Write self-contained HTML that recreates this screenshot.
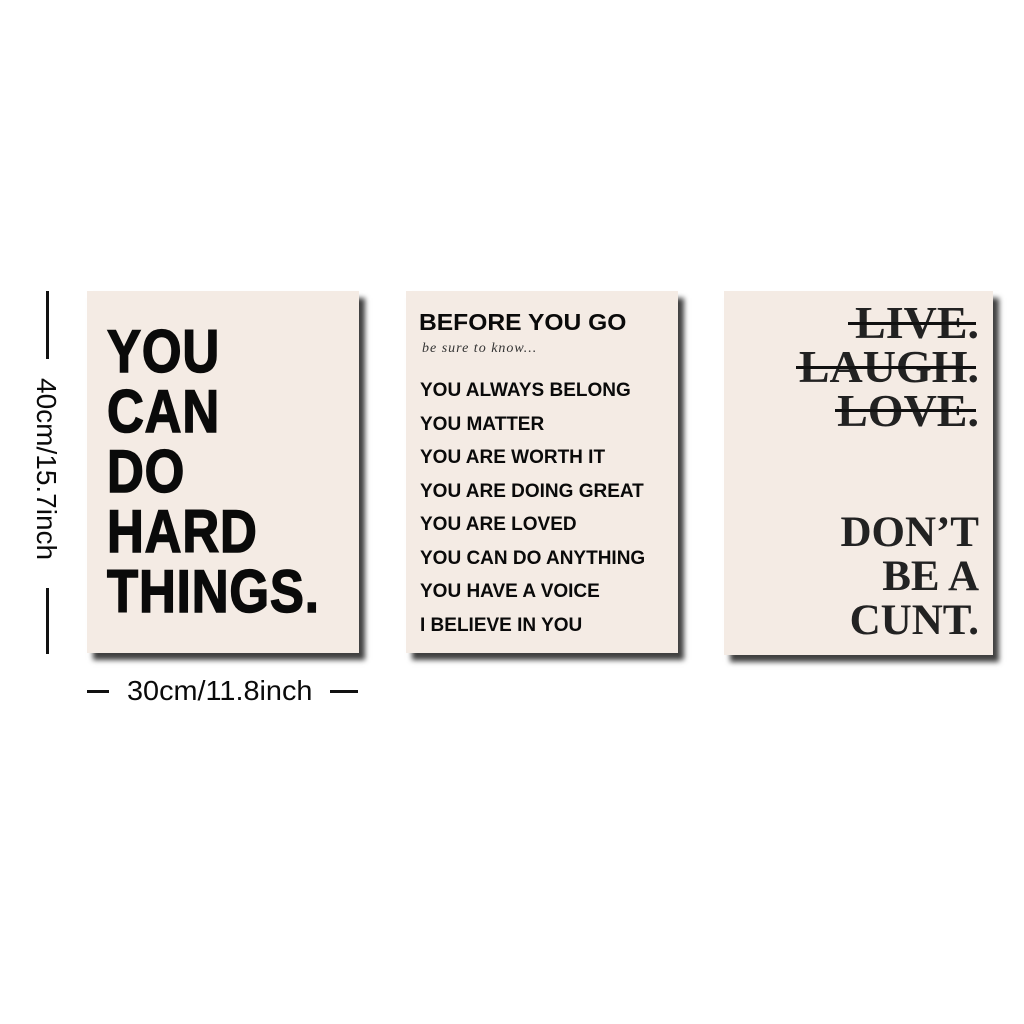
<!DOCTYPE html>
<html><head><meta charset="utf-8"><style>
body{margin:0;width:1024px;height:1024px;background:#fff;position:relative;overflow:hidden;font-family:"Liberation Sans",sans-serif}
.p{position:absolute;background:#f4ebe4;box-shadow:6px 7px 5px rgba(0,0,0,.75)}
.t{position:absolute;white-space:nowrap;color:#0a0a0a}
.big{font-weight:bold;font-size:60px;line-height:60px;transform:scaleX(.85);transform-origin:left top;letter-spacing:1px;-webkit-text-stroke:1.5px #0a0a0a}
.m{font-weight:bold;font-size:19px;transform:scaleX(1.0);transform-origin:left top}
.s{font-family:"Liberation Serif",serif;font-weight:bold;text-align:right}
.bar{position:absolute;background:#111}
</style></head><body>
<div class="bar" style="left:46px;top:291px;width:3px;height:68px"></div>
<div class="bar" style="left:46px;top:588px;width:3px;height:66px"></div>
<div class="t" style="left:46px;top:474px;font-size:28px;transform:rotate(90deg);width:0;height:0"><span style="position:absolute;left:-96px;top:-16px">40cm/15.7inch</span></div>
<div class="bar" style="left:87px;top:690px;width:22px;height:3px"></div>
<div class="bar" style="left:330px;top:690px;width:28px;height:3px"></div>
<div class="t" style="left:127px;top:675px;font-size:28px;transform:scaleX(1.03);transform-origin:left top">30cm/11.8inch</div>

<div class="p" style="left:87px;top:291px;width:272px;height:362px"></div>
<div class="t big" style="left:107px;top:322px">YOU<br>CAN<br>DO<br>HARD<br>THINGS.</div>

<div class="p" style="left:406px;top:291px;width:272px;height:362px"></div>
<div class="t" style="left:419px;top:309px;font-weight:bold;font-size:23px;transform:scaleX(1.07);transform-origin:left top">BEFORE YOU GO</div>
<div class="t" style="left:422px;top:341px;font-family:'Liberation Serif',serif;font-style:italic;font-size:14px;color:#333;letter-spacing:1px">be sure to know...</div>
<div class="t m" style="left:420px;top:374px;line-height:33.5px">YOU ALWAYS BELONG<br>YOU MATTER<br>YOU ARE WORTH IT<br>YOU ARE DOING GREAT<br>YOU ARE LOVED<br>YOU CAN DO ANYTHING<br>YOU HAVE A VOICE<br>I BELIEVE IN YOU</div>

<div class="p" style="left:724px;top:291px;width:269px;height:364px"></div>
<div class="t s" style="right:45px;top:301px;font-size:46px;line-height:44px;color:#222">LIVE.<br>LAUGH.<br>LOVE.</div>
<div class="bar" style="left:848px;top:322px;width:128px;height:3px"></div>
<div class="bar" style="left:796px;top:366px;width:180px;height:3px"></div>
<div class="bar" style="left:835px;top:409px;width:141px;height:3px"></div>
<div class="t s" style="right:45px;top:511px;font-size:43px;line-height:44px;color:#222">DON’T<br>BE A<br>CUNT.</div>
</body></html>
